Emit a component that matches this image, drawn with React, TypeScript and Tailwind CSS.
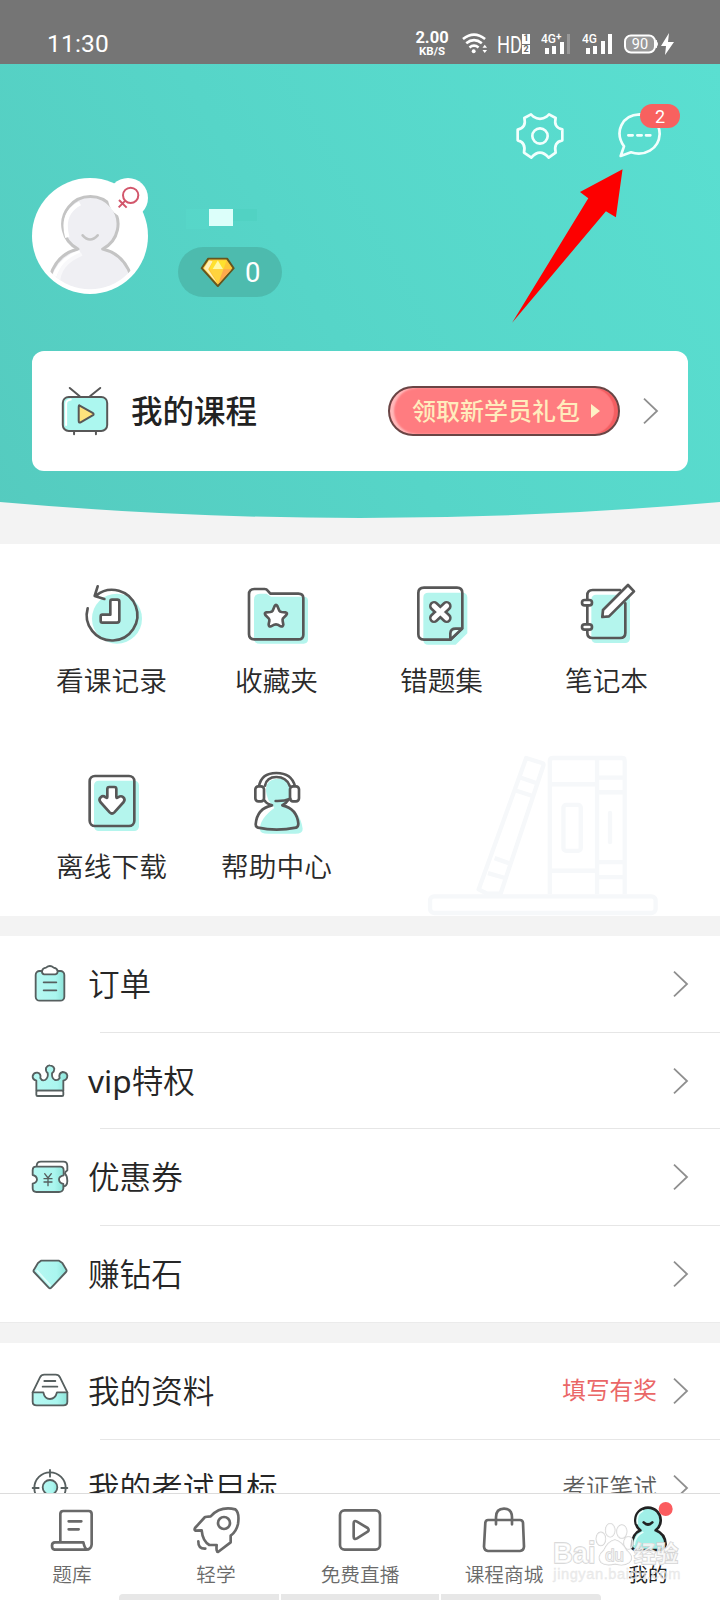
import React from "react";

const INK = "#575757";
const MINT = "#b4f5ed";
const LINE = "#565f5f";

type Box = { box: string; className: string; children: React.ReactNode; sw?: number; stroke?: string };

function Glyph({ box, className, children, sw = 8, stroke = INK }: Box) {
  return (
    <svg viewBox={box} className={className} fill="none" stroke={stroke} strokeWidth={sw} strokeLinecap="round" strokeLinejoin="round">
      {children}
    </svg>
  );
}

/* ---------- status bar ---------- */

function StatusBar() {
  return (
    <div className="flex h-16 items-start bg-[#757575] pr-[46px] pl-[47px] text-white">
      <div className="mt-[29px] font-['Roboto'] text-[24.5px] leading-[30px] tracking-[0.2px]">11:30</div>
      <div className="mt-[30px] ml-auto flex h-7 items-start font-['Roboto']">
        <div className="-ml-1 flex w-8 flex-col items-center font-bold">
          <span className="text-[16.5px] leading-[16px]">2.00</span>
          <span className="text-[11.5px] leading-[11px]">KB/S</span>
        </div>
        <svg viewBox="300 96 80 70" className="ml-[14px] mt-[2px] h-[23px] w-[26px]" fill="none" stroke="#fff" strokeWidth="8">
          <path d="M303 117 Q337 90 371 117M313 130 Q337 111 361 130M323 143 Q337 132 351 143" />
          <circle cx="336" cy="155" r="6" fill="#fff" stroke="none" />
          <path d="M363 144l7-9 7 9zM363 151l7 9 7-9z" fill="#fff" stroke="none" />
        </svg>
        <div className="ml-[9px] flex items-start">
          <svg viewBox="0 0 25 28" className="h-7 w-[25px]" fill="#fff">
            <text x="0" y="22.5" fontSize="24" textLength="25" lengthAdjust="spacingAndGlyphs">HD</text>
          </svg>
          <span className="mt-[4px] flex w-[8px] flex-col gap-px text-[9px] leading-[9.5px] font-bold text-[#666]">
            <span className="bg-white text-center">1</span>
            <span className="bg-white text-center">2</span>
          </span>
        </div>
        <svg viewBox="0 0 30 24" className="ml-[11px] mt-[2px] h-6 w-[30px]" fill="#fff">
          <text x="0" y="11" fontSize="13" fontWeight="500" textLength="15" lengthAdjust="spacingAndGlyphs">4G</text>
          <text x="15" y="8" fontSize="10" fontWeight="700">+</text>
          <rect x="4" y="16" width="4" height="6" /><rect x="11" y="14" width="4" height="8" />
          <rect x="19" y="10" width="4" height="12" /><rect x="26" y="2" width="3" height="20" fill="#999" />
        </svg>
        <svg viewBox="0 0 30 24" className="ml-[11px] mt-[2px] h-6 w-[30px]" fill="#fff">
          <text x="0" y="11" fontSize="13" fontWeight="500" textLength="15" lengthAdjust="spacingAndGlyphs">4G</text>
          <rect x="4" y="16" width="4" height="6" /><rect x="11" y="14" width="4" height="8" />
          <rect x="19" y="9" width="4" height="13" /><rect x="26" y="2" width="4" height="20" />
        </svg>
        <svg viewBox="0 0 50 24" className="ml-[12px] mt-[2px] h-6 w-[50px]" fill="#fff">
          <rect x="1" y="3.5" width="30" height="17" rx="6" fill="#999" stroke="#fff" strokeWidth="2" />
          <path d="M32 8 q3 4 0 8z" stroke="#fff" />
          <text x="16" y="17" fontSize="14.5" textAnchor="middle">90</text>
          <path d="M45 1 L37 14 h5 l-1 9 L50 10 h-6z" />
        </svg>
      </div>
    </div>
  );
}

/* ---------- header ---------- */

function Avatar() {
  return (
    <svg viewBox="90 525 360 360" className="h-[120px] w-[120px]">
      <defs><clipPath id="face"><circle cx="270" cy="708" r="160" /></clipPath></defs>
      <circle cx="270" cy="708" r="174" fill="#fff" />
      <g clipPath="url(#face)">
        <path d="M150 830 Q170 762 234 747 A83 83 0 1 1 308 747 Q372 762 394 830 L394 900 H150Z" fill="#efeff3" stroke="#c4c4c4" strokeWidth="9" strokeLinejoin="round" />
        <path d="M160 836 Q180 776 240 757 M202 712 Q182 640 240 610" fill="none" stroke="#fff" strokeWidth="13" />
        <path d="M176 868 Q164 795 245 762" fill="none" stroke="#f8f8fa" strokeWidth="12" />
      </g>
      <path d="M248 706 Q270 731 293 706" fill="none" stroke="#c4c4c4" strokeWidth="8" strokeLinecap="round" />
      <circle cx="384" cy="594" r="60" fill="#fff" />
      <g fill="none" stroke="#d2566b" strokeWidth="6">
        <circle cx="392" cy="586" r="23" /><path d="M376 602L356 622M357 600L380 623" />
      </g>
    </svg>
  );
}

function YellowDiamond() {
  return (
    <svg viewBox="598 765 112 98" className="h-[33px] w-[37px]">
      <path d="M626 772 H683 L703 801 L655 855 L606 801Z" fill="#ffc737" stroke="#65551f" strokeWidth="6" strokeLinejoin="round" />
      <path d="M628 778L613 801L654 847L626 804L640 780Z" fill="#fff0b8" />
      <path d="M640 778H681L672 804H630Z" fill="#ffe12e" />
      <path d="M655 778L671 804H639Z" fill="#fff8a5" />
      <path d="M671 804H697L656 849Z" fill="#ffa94d" />
      <path d="M630 804H672L656 846Z" fill="#ffd33e" />
    </svg>
  );
}

function Chevron({ className = "" }: { className?: string }) {
  return (
    <svg viewBox="0 0 16 28" className={"h-7 w-4 shrink-0 " + className} fill="none" stroke="#8f8f8f" strokeWidth="1.8">
      <path d="M1 1.7 L14 14 L1 26.3" />
    </svg>
  );
}

function Header() {
  return (
    <header className="relative flex h-[455px] flex-col bg-[linear-gradient(60deg,#55cbbf_0%,#56d5c8_45%,#5adfd1_100%)] px-8">
      <div className="flex h-[111px] justify-end pt-[38px] pr-2">
        <Glyph box="462 330 150 150" className="mt-[8px] h-[50px] w-[50px]" stroke="#f2fffd" sw={8}>
          <path d="M513 343 L520 350 Q540 363 560 350 L567 343 L587 354 Q580 383 607 388 V421 Q580 426 587 458 L566 473 Q540 443 514 473 L492 458 Q499 427 473 421 V389 Q500 383 493 354Z" />
          <circle cx="540" cy="408" r="23" />
        </Glyph>
        <div className="relative ml-[52px] h-[60px] w-[64px]">
          <Glyph box="770 306 192 180" className="h-[60px] w-[64px]" stroke="#f2fffd" sw={8}>
            <path d="M784 468 L794 439 C765 397 786 345 841 343 C878 344 901 371 901 402 C899 449 853 470 815 457Z" />
            <path d="M807 406h13M834 406h13M860 406h13" />
          </Glyph>
          <span className="absolute top-[2px] right-0 h-6 w-10 rounded-full bg-[#f8615f] text-center font-['Roboto'] text-[18px] leading-[25px] text-white">2</span>
        </div>
      </div>
      <div className="-ml-0.5 flex h-[120px]">
        <Avatar />
        <div className="ml-7 flex flex-col">
          <div className="mt-[34px] flex h-[20px]">
            <span className="ml-2 h-5 w-[23px] bg-[#58d8c9]/60" />
            <span className="h-[17px] w-6 bg-[#dcfffa]" />
            <span className="h-3 w-6 bg-[#51d2c3]" />
          </div>
          <div className="mt-[18px] flex h-[50px] w-[104px] shrink-0 items-center rounded-full bg-[#4dbbae] pl-[21px] text-white">
            <YellowDiamond />
            <span className="ml-[9px] pt-0.5 font-['Roboto'] text-[27.5px] leading-none">0</span>
          </div>
        </div>
      </div>
      <div className="mt-[56px] flex h-[120px] items-center rounded-xl bg-white pr-[29px] pl-[28px]">
        <Glyph box="180 163 150 160" className="h-[53px] w-[50px]" sw={6}>
          <path d="M209 172L239 197M301 172L270 197M222 304V312M288 304V312" />
          <rect x="188" y="199" width="134" height="103" rx="18" fill="#acf7ef" />
          <path d="M198 284V220Q198 209 212 207" stroke="#fff" />
          <path d="M239 225Q236 222 236 230V272Q236 279 243 275L278 255Q284 251 278 247Z" fill="#ffe37c" />
        </Glyph>
        <span className="ml-[21px] text-[31.5px] leading-10 font-medium text-[#222]">我的课程</span>
        <div className="-mt-px ml-auto flex h-[50px] w-[232px] items-center rounded-full border-2 border-[#6a4545] bg-[#ff7c80] pl-[22px] shadow-[inset_4px_0_2px_#ffb9ba,inset_-4px_0_1px_#f45e61] text-[#ffecbd]">
          <span className="text-[24px] font-medium">领取新学员礼包</span>
          <svg viewBox="0 0 9 14" className="ml-[11px] h-[14px] w-[9px]"><path d="M0 0L9 7L0 14Z" fill="#fff1c5" /></svg>
        </div>
        <Chevron className="ml-[23px]" />
      </div>
      <svg viewBox="0 0 720 17" className="absolute bottom-0 left-0 h-[17px] w-[720px]"><path d="M0 0Q360 32 720 0V17H0Z" fill="#f3f3f3" /></svg>
      <svg viewBox="450 500 345 475" className="absolute top-[103px] left-[510px] h-[158px] w-[115px]"><path d="M456 968L685 594L660 575L788 507L768 651L738 633Z" fill="#fd0000" /></svg>
    </header>
  );
}

/* ---------- tool grid ---------- */

const GRID_ICON = "h-[70px] w-[70px]";

const HistoryIcon = () => (
  <Glyph box="232 60 210 210" className={GRID_ICON}>
    <circle cx="352" cy="176" r="75" fill={MINT} stroke="none" />
    <path d="M264 145A76 76 0 1 0 290 106M294 79L285 108L314 117" />
    <path d="M337 119H353Q359 119 359 125V181Q359 188 352 188H308Q303 188 303 183V170Q303 164 308 164H332V125Q332 119 337 119Z" fill="#fff" />
  </Glyph>
);

const FolderIcon = () => (
  <Glyph box="726 60 210 210" className={GRID_ICON}>
    <path d="M762 120Q762 101 780 101H800L813 110H912Q924 110 924 122V238Q924 251 911 251H780Q762 251 762 236Z" fill={MINT} stroke="none" />
    <path d="M747 103Q747 87 763 87H794Q800 87 803 92L811 101H895Q910 101 910 115V224Q910 238 895 238H763Q747 238 747 223Z" />
    <path d="M824 138Q828 131 832 138L838 152Q840 155 845 156L856 157Q864 159 859 165L849 175Q847 178 848 183L850 194Q849 201 842 199L833 194Q828 192 823 194L813 199Q806 201 806 193L808 183Q809 178 806 175L796 165Q792 159 799 157L811 156Q816 155 818 152Z" fill="#fff" />
  </Glyph>
);

const MistakeIcon = () => (
  <Glyph box="142 60 210 210" className={GRID_ICON}>
    <path d="M191 113Q191 98 206 98H308Q323 98 323 113V220L288 254H206Q191 254 191 239Z" fill={MINT} stroke="none" />
    <path d="M193 83H292Q308 83 308 99V205L272 239H193Q176 239 176 223V99Q176 83 193 83Z" />
    <path d="M272 239V220Q273 206 288 206H307Z" fill="#e6fffb" />
    <path d="M223 138L261 174M261 138L223 174" stroke={INK} strokeWidth="30" />
    <path d="M223 138L261 174M261 138L223 174" stroke="#fff" strokeWidth="15" />
  </Glyph>
);

const NotebookIcon = () => (
  <Glyph box="636 60 210 210" className={GRID_ICON}>
    <rect x="694" y="104" width="116" height="145" rx="14" fill={MINT} stroke="none" />
    <path d="M780 90H698Q682 90 682 106V219Q682 234 698 234H780Q796 234 796 219V130" />
    <rect x="666" y="120" width="30" height="16" rx="8" fill="#fff" /><rect x="666" y="193" width="30" height="16" rx="8" fill="#fff" />
    <path d="M804 75L822 94L747 169L727 171L729 150Z" fill="#fff" />
  </Glyph>
);

const DownloadIcon = () => (
  <Glyph box="232 618 210 210" className={GRID_ICON}>
    <rect x="283" y="662" width="135" height="151" rx="14" fill={MINT} stroke="none" />
    <rect x="270" y="648" width="134" height="150" rx="16" />
    <path d="M329 681H344Q350 681 350 687V711Q350 716 355 712Q364 706 370 711Q378 718 372 726L344 757Q337 764 330 757L302 726Q296 718 304 711Q310 706 318 712Q323 716 323 711V687Q323 681 329 681Z" fill="#fff" />
  </Glyph>
);

const HelpIcon = () => (
  <Glyph box="726 618 210 210" className={GRID_ICON}>
    <path d="M805 720Q780 655 842 656Q877 662 874 700L862 726L853 739Q900 750 908 806Q909 821 886 821H805Q780 821 780 809Q778 777 823 744Z" fill={MINT} stroke="none" />
    <path d="M777 679Q784 639 829 639Q875 639 885 679M795 677Q800 651 829 651Q859 651 869 677" />
    <path d="M795 723Q799 731 816 736Q771 745 767 793Q767 801 774 803Q829 815 888 803Q895 800 895 791Q891 746 847 736Q857 732 864 721" />
    <rect x="766" y="679" width="26" height="45" rx="9" fill="#fff" /><rect x="870" y="679" width="27" height="45" rx="9" fill="#fff" />
    <path d="M827 723Q853 724 871 716" />
  </Glyph>
);

const Books = () => (
  <svg viewBox="200 585 695 490" className="absolute right-[61px] -bottom-px h-[163px] w-[232px]" fill="none" stroke="#f6f8fa" strokeWidth="13" strokeLinejoin="round">
    <path d="M497 597L547 613Q551 616 547 625L420 1005H380L354 992ZM475 654L529 673M463 694L519 712M402 898L447 914M382 943L431 957" />
    <path d="M568 1006V606Q568 597 578 597H785Q793 597 793 607V1006M710 597V1006M568 676H710M568 936H710M710 656H793M710 700H793M710 910H793M710 955H793" />
    <rect x="609" y="738" width="52" height="138" rx="8" /><path d="M749 762V850" strokeLinecap="round" />
    <rect x="208" y="1013" width="678" height="50" rx="12" />
  </svg>
);

const tools = [
  { label: "看课记录", icon: <HistoryIcon /> },
  { label: "收藏夹", icon: <FolderIcon /> },
  { label: "错题集", icon: <MistakeIcon /> },
  { label: "笔记本", icon: <NotebookIcon /> },
  { label: "离线下载", icon: <DownloadIcon /> },
  { label: "帮助中心", icon: <HelpIcon /> },
];

function ToolGrid() {
  return (
    <section className="relative mt-[24.5px] h-[372.5px] shrink-0 overflow-hidden bg-white">
      <Books />
      <div className="relative grid grid-cols-4 pr-[31px] pl-[29px]">
        {tools.map((t) => (
          <div key={t.label} className="flex h-[186px] flex-col items-center pt-[36.5px]">
            {t.icon}
            <span className="mt-[12px] text-[27.7px] leading-9 font-[350] text-[#2a2a2a]">{t.label}</span>
          </div>
        ))}
      </div>
    </section>
  );
}

/* ---------- list ---------- */

const ROW_ICON = "h-11 w-11 shrink-0";

const MintFade = () => (
  <defs><linearGradient id="mint" x1="0" x2="1"><stop offset="0" stopColor="#b7f8f2" /><stop offset="0.7" stopColor="#aaf6ef" /><stop offset="1" stopColor="#8ce3d8" /></linearGradient></defs>
);

const OrderIcon = () => (
  <Glyph box="84 126 132 132" className={ROW_ICON} sw={5.5} stroke={LINE}>
    <MintFade />
    <rect x="107" y="153" width="86" height="89" rx="12" fill="url(#mint)" />
    <path d="M132 163Q125 161 126 153Q128 144 138 143Q150 133 161 143Q172 145 173 154Q173 162 166 163Z" fill="#fff" />
    <path d="M131 187H169M131 211H169" />
  </Glyph>
);

const CrownIcon = () => (
  <Glyph box="84 415 132 132" className={ROW_ICON} sw={5.5} stroke={LINE}>
    <path d="M109 510V480Q97 476 98 466Q101 455 112 456Q124 459 121 472Q126 482 135 478Q146 471 143 457Q136 451 138 442Q143 433 150 434Q160 435 163 444Q163 453 156 458Q155 473 165 478Q175 480 179 472Q175 458 188 454Q200 455 202 465Q202 477 190 480V510Z" fill="url(#mint)" />
    <rect x="109" y="510" width="81" height="16" rx="4" fill="#fff" />
  </Glyph>
);

const CouponIcon = () => (
  <Glyph box="84 705 132 132" className={ROW_ICON} sw={5.5} stroke={LINE}>
    <path d="M110 738Q110 725 123 725H190Q202 725 202 738V751Q195 754 195 761Q202 768 202 783Q202 799 188 800" />
    <path d="M108 740H181Q191 740 191 752V766Q177 769 177 778Q177 789 190 792V806Q188 816 177 816H109Q98 816 98 805V791Q111 788 111 778Q110 768 98 765V750Q98 740 108 740Z" fill="url(#mint)" />
    <path d="M134 761L144 774L154 761M144 774V797M132 776H156M132 786H156" strokeWidth="4" />
  </Glyph>
);

const DiamondIcon = () => (
  <Glyph box="84 994 132 132" className={ROW_ICON} sw={5.5} stroke={LINE}>
    <path d="M123 1020H177L187 1027L199 1047Q201 1051 198 1054L154 1101Q150 1105 146 1101L102 1054Q99 1051 102 1047L114 1027Z" fill="url(#mint)" />
    <path d="M112 1051L150 1093" stroke="#e0fffb" />
  </Glyph>
);

const TrayIcon = () => (
  <Glyph box="84 117 132 132" className={ROW_ICON} sw={5.5} stroke={LINE}>
    <path d="M98 187L120 142Q124 134 133 134H167Q176 134 180 142L202 187" />
    <path d="M98 187H130Q134 207 150 207Q166 207 171 187H202V215Q202 226 190 226H110Q98 226 98 215Z" fill="url(#mint)" />
    <path d="M133 153H166M128 170H172" />
  </Glyph>
);

const TargetIcon = () => (
  <Glyph box="84 406 132 132" className={ROW_ICON} sw={5.5} stroke={LINE}>
    <circle cx="150" cy="472" r="47" /><circle cx="150" cy="470" r="22" fill="url(#mint)" />
    <path d="M150 418V438M98 472H116M184 472H202M150 506V525" />
  </Glyph>
);

type RowProps = { icon: React.ReactNode; label: React.ReactNode; note?: string; noteClass?: string; last?: boolean };

function Row({ icon, label, note, noteClass = "", last }: RowProps) {
  return (
    <div className="relative flex h-[96.5px] shrink-0 items-center pr-[31px] pl-[28px]">
      {icon}
      <span className="ml-[16px] text-[31.6px] leading-10 font-[350] text-[#262626]">{label}</span>
      <span className={"ml-auto text-[23.7px] " + noteClass}>{note}</span>
      <Chevron className="ml-[16px]" />
      {!last && <span className="absolute right-0 bottom-0 left-[100px] h-px bg-[#e6e6e6]" />}
    </div>
  );
}

/* ---------- tab bar ---------- */

const TAB_ICON = "h-[60px] w-[60px]";
const TAB = "#696969";

const QuizIcon = () => (
  <Glyph box="126 510 180 180" className={TAB_ICON} stroke={TAB}>
    <path d="M181 636V552Q181 543 190 543H266Q275 543 275 552V643Q274 659 258 659H164Q156 658 156 647Q156 637 165 637H250Q254 656 261 658" />
    <path d="M206 574H244M206 598H236" />
  </Glyph>
);

const RocketIcon = () => (
  <Glyph box="558 510 180 180" className={TAB_ICON} stroke={TAB}>
    <path d="M632 559Q661 527 706 538Q719 548 714 582Q709 605 692 617V637L654 666Q648 666 650 645H628Q608 633 605 601L586 602Q582 600 585 594L615 561Z" />
    <circle cx="672" cy="579" r="18" /><path d="M595 634Q594 657 616 656" />
  </Glyph>
);

const LiveIcon = () => (
  <Glyph box="990 510 180 180" className={TAB_ICON} stroke={TAB}>
    <rect x="1020" y="541" width="120" height="118" rx="14" />
    <path d="M1061 580Q1061 569 1071 575L1103 594Q1109 600 1103 605L1071 625Q1061 630 1061 620Z" />
  </Glyph>
);

const BagIcon = () => (
  <Glyph box="342 510 180 180" className={TAB_ICON} stroke={TAB}>
    <path d="M384 570H480Q488 570 489 578L492 650Q491 662 480 663H384Q373 662 372 650L376 578Q377 570 384 570Z" />
    <path d="M408 583V562Q408 536 432 536Q456 536 456 562V583" />
  </Glyph>
);

const MeIcon = () => (
  <Glyph box="774 510 180 180" className={TAB_ICON} stroke="#222" sw={8}>
    <path d="M841 601A38 38 0 1 1 887 601Q915 611 917 643Q913 661 895 660H838Q817 661 815 650Q816 611 841 601Z" fill="#a0efe7" />
    <path d="M832 580Q828 552 848 543M823 643Q826 617 848 607" stroke="#e8fffc" strokeWidth="5" />
    <path d="M851 577Q864 590 877 577" />
    <circle cx="917" cy="537" r="21" fill="#fb5c5f" stroke="none" />
  </Glyph>
);

const tabs = [
  { label: "题库", icon: <QuizIcon /> },
  { label: "轻学", icon: <RocketIcon /> },
  { label: "免费直播", icon: <LiveIcon /> },
  { label: "课程商城", icon: <BagIcon /> },
  { label: "我的", icon: <MeIcon />, active: true },
];

function Watermark() {
  return (
    <svg viewBox="570 570 400 200" className="absolute top-[27px] left-[550px] h-[67px] w-[133px]" fill="#fff" fillOpacity="0.7" stroke="#d2d2d2" strokeWidth="4">
      <g fontFamily="Liberation Sans, Noto Sans CJK SC, sans-serif" fontWeight="700" paintOrder="stroke">
        <text x="579" y="697" fontSize="88" textLength="128" lengthAdjust="spacingAndGlyphs">Bai</text>
        <ellipse cx="723" cy="623" rx="14" ry="20" /><ellipse cx="751" cy="597" rx="14" ry="20" />
        <ellipse cx="786" cy="601" rx="15" ry="20" /><ellipse cx="806" cy="635" rx="14" ry="19" />
        <path d="M765 626Q785 630 800 657Q826 679 807 695Q790 706 766 698Q737 705 724 694Q709 677 732 657Q745 630 765 626Z" />
        <text x="736" y="689" fontSize="50" fontWeight="400">du</text>
        <text x="822" y="692" fontSize="67">经验</text>
      </g>
      <text x="580" y="745" fontFamily="Liberation Sans" fontSize="44" fill="#e4e4e4" stroke="#e6e6e6" strokeWidth="1" textLength="382">jingyan.baidu.com</text>
    </svg>
  );
}

function TabBar() {
  return (
    <nav className="relative flex h-[107px] shrink-0 flex-col border-t border-[#dcdcdc] bg-white">
      <div className="grid h-[100px] grid-cols-5">
        {tabs.map((t) => (
          <div key={t.label} className="flex flex-col items-center pt-[6px]">
            {t.icon}
            <span className={"mt-px text-[19.7px] leading-7 " + (t.active ? "text-[#222]" : "font-[350] text-[#6a6a6a]")}>{t.label}</span>
          </div>
        ))}
      </div>
      <div className="mx-auto flex h-[6px] w-[482px] gap-0.5 overflow-hidden rounded-t-sm">
        <span className="w-[160px] bg-[#e7e7e7]" />
        <span className="w-[158px] bg-[#e7e7e7]" />
        <span className="flex-1 bg-[#e7e7e7]" />
      </div>
      <Watermark />
    </nav>
  );
}

export default function App() {
  return (
    <main className="flex h-[1600px] w-[720px] flex-col overflow-hidden bg-[#f3f3f3] font-['Noto_Sans','Noto_Sans_CJK_SC',sans-serif]">
      <StatusBar />
      <Header />
      <ToolGrid />
      <div className="flex min-h-0 flex-1 flex-col gap-[20px] overflow-hidden pt-5">
        <section className="flex shrink-0 flex-col border-b border-[#ebebeb] bg-white">
          <Row icon={<OrderIcon />} label="订单" />
          <Row icon={<CrownIcon />} label={<><span className="font-normal">vip</span>特权</>} />
          <Row icon={<CouponIcon />} label="优惠券" />
          <Row icon={<DiamondIcon />} label="赚钻石" last />
        </section>
        <section className="flex shrink-0 flex-col bg-white">
          <Row icon={<TrayIcon />} label="我的资料" note="填写有奖" noteClass="text-[#ea6767]" />
          <Row icon={<TargetIcon />} label="我的考试目标" note="考证笔试" noteClass="font-[350] text-[#5c5c5c]" last />
        </section>
      </div>
      <TabBar />
    </main>
  );
}
